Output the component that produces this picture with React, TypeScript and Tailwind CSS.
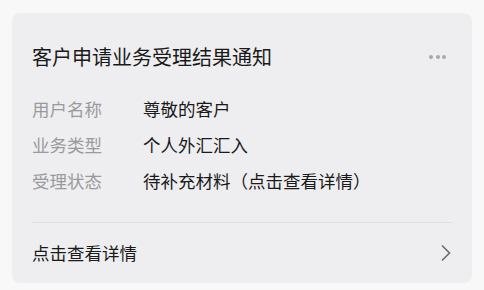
const ROWS = [
  { label: '用户名称', value: '尊敬的客户' },
  { label: '业务类型', value: '个人外汇汇入' },
  { label: '受理状态', value: '待补充材料（点击查看详情）' },
];

export default function App() {
  return (
    <div
      className="h-[290px] w-[484px] bg-[#f8f8f9] px-3 pt-[13px]"
      style={{ fontFamily: '"Noto Sans CJK SC", "Noto Sans", sans-serif' }}
    >
      <div className="rounded-lg bg-[#eeeef0] px-5">
        <div className="flex items-center justify-between pt-[30px] pb-[26px]">
          <h1 className="text-[20px] leading-[28px] text-[#1a1a1a]">客户申请业务受理结果通知</h1>
          <div className="mr-[6px] flex gap-[2.5px]">
            <span className="h-[4px] w-[4px] rounded-full bg-[#a8a8ac]" />
            <span className="h-[4px] w-[4px] rounded-full bg-[#a8a8ac]" />
            <span className="h-[4px] w-[4px] rounded-full bg-[#a8a8ac]" />
          </div>
        </div>
        <div className="flex flex-col gap-[12px] pb-[29px]">
          {ROWS.map((row) => (
            <div key={row.label} className="flex items-center text-[17.5px] leading-[24px]">
              <span className="w-[111px] text-[#9a9a9e]">{row.label}</span>
              <span className="text-[#1a1a1a]">{row.value}</span>
            </div>
          ))}
        </div>
        <div className="h-px bg-[#dedee2]" />
        <div className="flex h-[60px] items-center justify-between">
          <span className="text-[17.5px] text-[#1a1a1a]">点击查看详情</span>
          <svg width="11" height="18" viewBox="0 0 11 18" className="mr-[1px]">
            <path d="M2 1.5l7.5 7.5-7.5 7.5" fill="none" stroke="#6b6b6f" strokeWidth="1.6" />
          </svg>
        </div>
      </div>
    </div>
  );
}
